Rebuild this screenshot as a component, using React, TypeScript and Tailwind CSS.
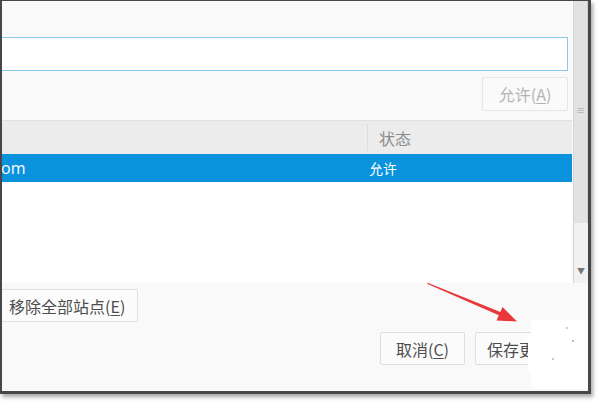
import React from 'react';

const font = "font-['Noto_Sans_CJK_SC','Noto_Sans',sans-serif]";

function Mnemonic({ label, k }: { label: string; k: string }) {
  return (
    <>
      {label}(<span className="underline underline-offset-2">{k}</span>)
    </>
  );
}

function Scrollbar() {
  return (
    <div className="w-[15px] flex flex-col bg-[#f1f1f1] border-l border-[#d6d6d6]">
      {/* thumb */}
      <div className="h-[222px] bg-[#e2e2e2] border-r border-[#cfcfcf] flex items-center justify-center">
        <span className="text-[9px] leading-none text-[#9a9a9a] -mt-[4px]">≡</span>
      </div>
      <div className="flex-1 flex items-end justify-center pb-[8px]">
        <span className="text-[8px] leading-none text-[#777]">▼</span>
      </div>
    </div>
  );
}

export default function App() {
  return (
    <div className={`w-[600px] h-[404px] bg-white overflow-hidden relative ${font}`}>
      <div className="w-[591px] h-[394px] border-l-2 border-t border-r-[3px] border-b-[3px] border-[#474747] bg-[#f9f9f9] flex flex-col overflow-hidden shadow-[2px_3px_4px_rgba(0,0,0,0.35)]">
        {/* scrolling part */}
        <div className="h-[282px] flex">
          <div className="flex-1 flex flex-col pt-[36px] min-w-0">
            <div className="h-[34px] -ml-[12px] mr-[5px] bg-white border border-[#88c9ec]" />
            <div className="flex justify-end mt-[6px] mr-[5px]">
              <button className="h-[34px] w-[86px] border border-[#e6e6e6] bg-[#fafafa] rounded-[2px] text-[16px] text-[#b4b4b4]">
                <Mnemonic label="允许" k="A" />
              </button>
            </div>
            <div className="mt-[9px] -ml-[10px] mr-[1px] flex-1 flex flex-col bg-white">
              <div className="h-[34px] flex bg-[#ececec] border-t border-[#e0e0e0] text-[16px] text-[#8c8c8c]">
                <div className="w-[376px] border-r border-[#dcdcdc] my-[3px]" />
                <div className="flex-1 flex items-center pl-[11px]">状态</div>
              </div>
              <div className="h-[28px] flex items-center bg-[#0a92dc] text-white text-[14px]">
                <div className="w-[377px] pl-[9px] font-['Open_Sans',sans-serif] text-[16px]">om</div>
                <div className="flex-1">允许</div>
              </div>
            </div>
          </div>
          <Scrollbar />
        </div>

        {/* footer */}
        <div className="flex-1 flex flex-col pt-[6px] text-[16px] text-[#4d4d4d]">
          <div className="flex">
            <button className="h-[33px] -ml-[12px] pl-[18px] pr-[12px] border border-[#e0e0e0] bg-[#fbfbfb] rounded-[2px]">
              <Mnemonic label="移除全部站点" k="E" />
            </button>
          </div>
          <div className="flex justify-end gap-[10px] mt-[10px] pr-[10px]">
            <button className="h-[33px] w-[85px] border border-[#dedede] bg-[#fbfbfb] rounded-[2px]">
              <Mnemonic label="取消" k="C" />
            </button>
            <button className="h-[33px] w-[103px] border border-[#dedede] bg-[#fbfbfb] rounded-[2px] text-left pl-[11px]">
              <Mnemonic label="保存更改" k="S" />
            </button>
          </div>
        </div>
      </div>

      {/* red annotation arrow */}
      <svg className="absolute left-0 top-0 pointer-events-none" width="600" height="404" viewBox="0 0 600 404">
        <polygon points="427,282.5 427.6,284 500,315.8 501,312.2" fill="#e8373a" />
        <polygon points="517,321.5 502.5,307 496.5,320.5" fill="#e8373a" />
      </svg>

      {/* white smudge over the save button */}
      <div className="absolute left-[531px] top-[320px] w-[57px] h-[69px] bg-white rounded-[4px]" />
      <div className="absolute left-[528px] top-[334px] w-[10px] h-[40px] bg-white rounded-full" />
      <div className="absolute left-[572px] top-[340px] w-[2px] h-[2px] bg-[#bbb]" />
      <div className="absolute left-[566px] top-[327px] w-[2px] h-[2px] bg-[#ccc]" />
      <div className="absolute left-[552px] top-[358px] w-[2px] h-[2px] bg-[#ccc]" />
    </div>
  );
}
